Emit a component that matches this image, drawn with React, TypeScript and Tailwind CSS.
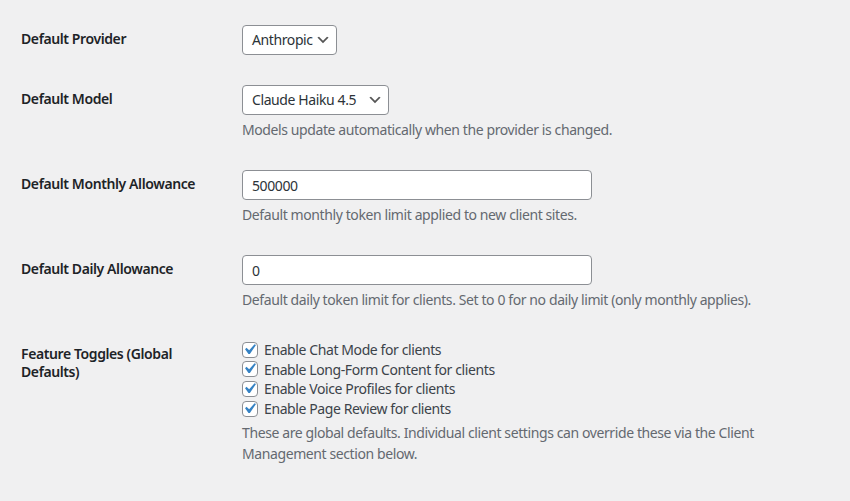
import React from 'react';

const font = "font-['Segoe_UI','Noto_Sans',sans-serif] tracking-[-0.4px]";

const Chevron = () => (
    <svg viewBox="0 0 20 20" className="absolute right-[5px] top-1/2 h-4 w-4 -translate-y-1/2" aria-hidden>
        <path d="M5 6l5 5 5-5 2 1-7 7-7-7 2-1z" fill="#555" />
    </svg>
);

const Select: React.FC<{ value: string; width: string }> = ({ value, width }) => (
    <div
        className={`relative flex h-[30px] items-center rounded-[4px] border border-[#8c8f94] bg-white pl-[9px] pr-6 text-[14px] text-[#2c3338] ${width}`}
    >
        <span className="leading-none">{value}</span>
        <Chevron />
    </div>
);

const TextInput: React.FC<{ value: string }> = ({ value }) => (
    <div className="flex h-[30px] w-[350px] items-center rounded-[4px] border border-[#8c8f94] bg-white px-[9px] text-[14px] text-[#2c3338]">
        {value}
    </div>
);

const Description: React.FC<{ children: React.ReactNode }> = ({ children }) => (
    <p className="mt-1 text-[14px] leading-[21px] text-[#646970]">{children}</p>
);

const Checkbox: React.FC<{ label: string }> = ({ label }) => (
    <label className="flex h-[19.6px] items-center gap-1.5 text-[14px] text-[#3c434a]">
        <span className="relative h-4 w-4 flex-shrink-0 rounded-[4px] border border-[#8c8f94] bg-white">
            <svg viewBox="0 0 20 20" className="absolute -left-[4px] -top-[4px] h-[21px] w-[21px]" aria-hidden>
                <path d="M14.83 4.89l1.34.94-5.81 8.38H9.02L5.78 9.67l1.34-1.25 2.57 2.4z" fill="#3582c4" />
            </svg>
        </span>
        {label}
    </label>
);

const Row: React.FC<{ label: React.ReactNode; children: React.ReactNode }> = ({ label, children }) => (
    <div className="flex">
        <div className="w-[211px] flex-shrink-0 py-5 pr-2.5 text-[14px] font-semibold leading-[1.3] text-[#1d2327]">
            {label}
        </div>
        <div className="flex-1 px-2.5 py-[15px]">{children}</div>
    </div>
);

export default function App() {
    return (
        <div className={`min-h-[501px] w-[850px] bg-[#f0f0f1] pl-[21px] pt-[10px] ${font}`}>
            <div className="w-[819px]">
                <Row label="Default Provider">
                    <Select value="Anthropic" width="w-[95px]" />
                </Row>

                <Row label="Default Model">
                    <Select value="Claude Haiku 4.5" width="w-[147px]" />
                    <Description>Models update automatically when the provider is changed.</Description>
                </Row>

                <Row label="Default Monthly Allowance">
                    <TextInput value="500000" />
                    <Description>Default monthly token limit applied to new client sites.</Description>
                </Row>

                <Row label="Default Daily Allowance">
                    <TextInput value="0" />
                    <Description>
                        Default daily token limit for clients. Set to 0 for no daily limit (only monthly applies).
                    </Description>
                </Row>

                <Row label="Feature Toggles (Global Defaults)">
                    <div className="flex flex-col">
                        <Checkbox label="Enable Chat Mode for clients" />
                        <Checkbox label="Enable Long-Form Content for clients" />
                        <Checkbox label="Enable Voice Profiles for clients" />
                        <Checkbox label="Enable Page Review for clients" />
                    </div>
                    <Description>
                        These are global defaults. Individual client settings can override these via the Client
                        Management section below.
                    </Description>
                </Row>
            </div>
        </div>
    );
}
